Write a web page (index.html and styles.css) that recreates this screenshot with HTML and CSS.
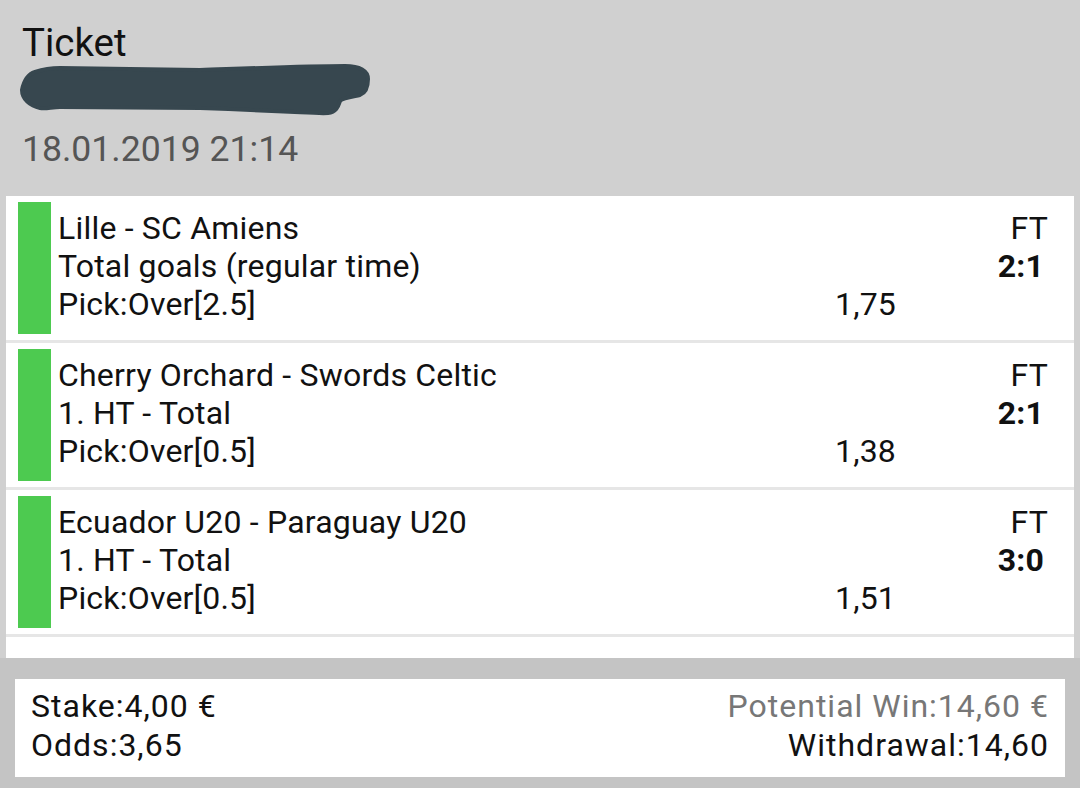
FILE: index.html
```html
<!DOCTYPE html>
<html lang="en">
<head>
<meta charset="utf-8">
<title>Ticket</title>
<link rel="stylesheet" href="styles.css">
</head>
<body>
<div class="screen">
  <header class="head">
    <div class="title">Ticket</div>
    <svg class="redact" width="360" height="52" viewBox="0 0 360 52" aria-hidden="true">
      <path d="M4 25 C6 15 11 9 17 7 C26 4 34 3 42 3 L182 5 C240 3 290 1 327 1 C342 1 350 6 350 14 C350 22 347 28 342 30 C332 32 324 33 322 36 C320 42 318 47 310 48 C300 49 290 47 182 43 L42 42 C34 42 28 44 22 43 C12 41 4 34 4 25 Z" fill="#37474f" stroke="#37474f" stroke-width="4" stroke-linejoin="round"/>
    </svg>
    <div class="date">18.01.2019 21:14</div>
  </header>

  <section class="card">
    <div class="item">
      <div class="bar"></div>
      <div class="body">
        <div class="line"><span>Lille - SC Amiens</span><span class="status">FT</span></div>
        <div class="line"><span>Total goals (regular time)</span><span class="score">2:1</span></div>
        <div class="line"><span>Pick:Over[2.5]</span><span class="odds">1,75</span></div>
      </div>
    </div>
    <div class="item">
      <div class="bar"></div>
      <div class="body">
        <div class="line"><span>Cherry Orchard - Swords Celtic</span><span class="status">FT</span></div>
        <div class="line"><span>1. HT - Total</span><span class="score">2:1</span></div>
        <div class="line"><span>Pick:Over[0.5]</span><span class="odds">1,38</span></div>
      </div>
    </div>
    <div class="item">
      <div class="bar"></div>
      <div class="body">
        <div class="line"><span>Ecuador U20 - Paraguay U20</span><span class="status">FT</span></div>
        <div class="line"><span>1. HT - Total</span><span class="score">3:0</span></div>
        <div class="line"><span>Pick:Over[0.5]</span><span class="odds">1,51</span></div>
      </div>
    </div>
  </section>

  <footer class="foot">
    <div class="summary">
      <div class="col">
        <div>Stake:4,00 €</div>
        <div>Odds:3,65</div>
      </div>
      <div class="col right">
        <div class="muted">Potential Win:14,60 €</div>
        <div>Withdrawal:14,60</div>
      </div>
    </div>
  </footer>
</div>
</body>
</html>
```

FILE: styles.css
```css
html, body {
  margin: 0;
  padding: 0;
}
body {
  width: 1080px;
  height: 788px;
  overflow: hidden;
  background: #d0d0d0;
  font-family: Roboto, "Noto Sans", "Liberation Sans", sans-serif;
  color: #111;
}
.screen {
  display: flex;
  flex-direction: column;
  height: 788px;
}
.head {
  padding: 21px 22px 0 22px;
  margin-bottom: 26px;
}
.title {
  font-size: 38.5px;
  line-height: 44px;
  color: #111;
}
.redact {
  display: block;
  margin-left: -4px;
  overflow: visible;
}
.date {
  margin-top: 11px;
  font-size: 35.6px;
  line-height: 42px;
  color: #555;
}
.card {
  background: #fff;
  margin: 0 6px 0 6px;
  padding-bottom: 21px;
}
.item {
  display: flex;
  padding: 6px 0 6px 12px;
  border-bottom: 3px solid #e6e6e6;
}
.bar {
  width: 33px;
  height: 132px;
  background: #4dca50;
  flex: none;
}
.body {
  flex: 1;
  padding: 7px 26px 0 7px;
  font-size: 32px;
  letter-spacing: 0.2px;
  line-height: 38px;
}
.line {
  display: flex;
  justify-content: space-between;
  white-space: nowrap;
}
.score {
  font-weight: 700;
  padding-right: 4px;
}
.odds {
  width: 213px;
  text-align: left;
}
.foot {
  flex: 1;
  background: #c4c4c4;
  padding: 21px 15px 11px 15px;
}
.summary {
  background: #fff;
  display: flex;
  justify-content: space-between;
  padding: 8px 16px 12px 16px;
  font-size: 32px;
  letter-spacing: 1px;
  line-height: 39px;
}
.col.right {
  text-align: right;
}
.muted {
  color: #777;
}
```
